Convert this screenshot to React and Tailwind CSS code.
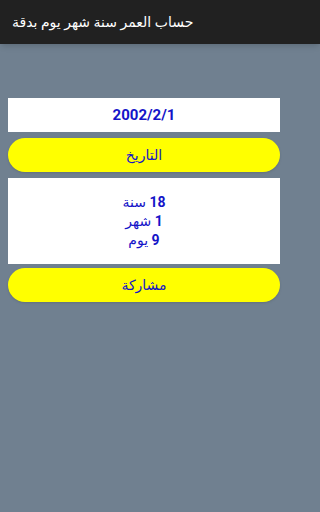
export default function App() {
  const font = { fontFamily: 'Roboto, "DejaVu Sans", sans-serif' };

  const rows = [
    ['18', 'سنة'],
    ['1', 'شهر'],
    ['9', 'يوم'],
  ];

  return (
    <div className="flex min-h-[512px] w-full flex-col bg-[#708090]" style={font}>
      {/* toolbar */}
      <div className="flex h-[44px] items-center bg-[#212121] px-3 shadow-md">
        <span dir="rtl" className="text-[14px] text-white">حساب العمر سنة شهر يوم بدقة</span>
      </div>

      <div className="flex w-[288px] flex-col px-2 pt-[54px]">
        <div className="flex h-[34px] items-center justify-center bg-white text-[15px] font-bold text-[#1414c8]">
          2002/2/1
        </div>
        <button className="mt-[6px] flex h-[34px] items-center justify-center rounded-full bg-[#ffff00] text-[14px] text-[#1414c8] shadow-sm">
          <span dir="rtl">التاريخ</span>
        </button>
        <div className="mt-[6px] flex h-[86px] flex-col items-center justify-center bg-white text-[14px] leading-[19px] text-[#1414c8]">
          {rows.map(([n, w]) => (
            <span key={w} dir="rtl">
              <span className="font-bold">{n}</span> {w}
            </span>
          ))}
        </div>
        <button className="mt-[4px] flex h-[34px] items-center justify-center rounded-full bg-[#ffff00] text-[14px] text-[#1414c8] shadow-sm">
          <span dir="rtl">مشاركة</span>
        </button>
      </div>
    </div>
  );
}
